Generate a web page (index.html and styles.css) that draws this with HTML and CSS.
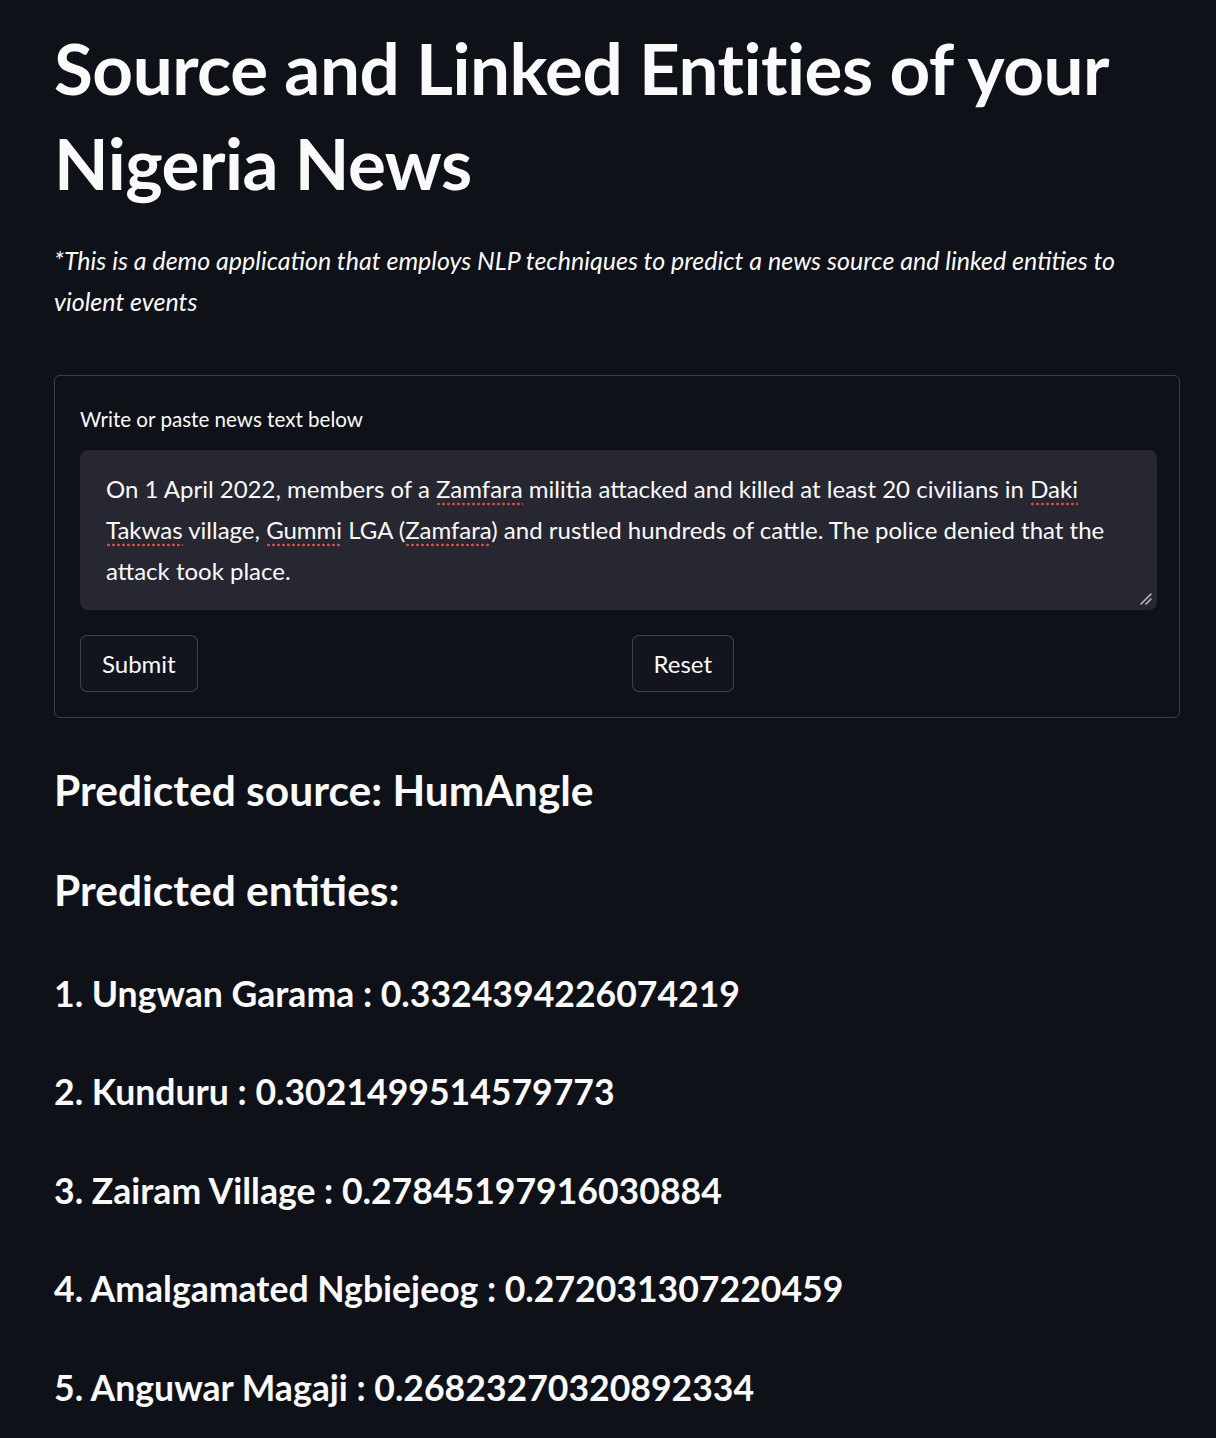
FILE: index.html
```html
<!DOCTYPE html>
<html lang="en">
<head>
<meta charset="utf-8">
<title>Source and Linked Entities of your Nigeria News</title>
<link rel="stylesheet" href="styles.css">
</head>
<body>
<main class="main">
  <h1 class="title">Source and Linked Entities of your Nigeria News</h1>
  <p class="intro"><em>*This is a demo application that employs NLP techniques to predict a news source and linked entities to violent events</em></p>

  <form class="form">
    <label class="label">Write or paste news text below</label>
    <div class="textarea"><span>On 1 April 2022, members of a </span><span class="sp">Zamfara</span><span> militia attacked and killed at least 20 civilians in </span><span class="sp">Daki</span> <span class="sp">Takwas</span><span> village, </span><span class="sp">Gummi</span><span> LGA (</span><span class="sp">Zamfara</span><span>) and rustled hundreds of cattle. The police denied that the</span> <span>attack took place.</span><svg class="grip" width="14" height="14" viewBox="0 0 14 14"><path d="M2 12 L12 2 M7 12 L12 7" stroke="#b8b8bc" stroke-width="1.6" stroke-linecap="round" fill="none"/></svg></div>
    <div class="cols">
      <div class="col"><button type="button" class="btn">Submit</button></div>
      <div class="col"><button type="button" class="btn">Reset</button></div>
    </div>
  </form>

  <h3 class="h3">Predicted source: HumAngle</h3>
  <h3 class="h3">Predicted entities:</h3>

  <div class="entities">
    <h4 class="h4">1. Ungwan Garama : 0.3324394226074219</h4>
    <h4 class="h4">2. Kunduru : 0.3021499514579773</h4>
    <h4 class="h4">3. Zairam Village : 0.27845197916030884</h4>
    <h4 class="h4">4. Amalgamated Ngbiejeog : 0.272031307220459</h4>
    <h4 class="h4">5. Anguwar Magaji : 0.26823270320892334</h4>
  </div>
</main>
</body>
</html>
```

FILE: styles.css
```css
html, body {
  margin: 0;
  padding: 0;
  background: #0e1117;
  color: #fafafa;
  font-family: "Lato", "Open Sans", sans-serif;
}

.main {
  padding: 0 36px 0 54px;
}

.title {
  margin: 0;
  padding-top: 20px;
  font-size: 71px;
  font-weight: 700;
  line-height: 95px;
  letter-spacing: -0.5px;
}

.intro {
  margin: 30px 0 0 0;
  font-size: 25px;
  line-height: 41px;
}

.form {
  margin-top: 53px;
  border: 1px solid rgba(250, 250, 250, 0.2);
  border-radius: 6px;
  padding: 25px 22px 25px 25px;
}

.label {
  display: block;
  font-size: 20.6px;
  line-height: 36px;
  margin-bottom: 13px;
}

.textarea {
  position: relative;
  background: #262730;
  border-radius: 8px;
  padding: 18px 26px 19px 26px;
  font-size: 24px;
  line-height: 41px;
}

.sp {
  background-image: radial-gradient(circle, #d4453a 1.2px, transparent 1.7px);
  background-size: 5px 4px;
  background-repeat: repeat-x;
  background-position: 0 100%;
  padding-bottom: 3px;
}

.grip {
  position: absolute;
  right: 4px;
  bottom: 4px;
}

.cols {
  display: grid;
  grid-template-columns: 1fr 1fr;
  column-gap: 26px;
  margin-top: 25px;
}

.btn {
  font-family: inherit;
  font-size: 24px;
  color: #fafafa;
  background: #12151d;
  border: 1px solid rgba(250, 250, 250, 0.2);
  border-radius: 7px;
  height: 57px;
  padding: 0 21px;
  cursor: pointer;
}

.h3 {
  margin: 0;
  font-size: 42.5px;
  font-weight: 700;
  line-height: 50px;
  padding-top: 47px;
}
.h3 + .h3 {
  padding-top: 50px;
}

.entities {
  padding-top: 4px;
}

.h4 {
  margin: 0;
  font-size: 35.6px;
  font-weight: 700;
  line-height: 48px;
  padding-top: 50.5px;
}
```
